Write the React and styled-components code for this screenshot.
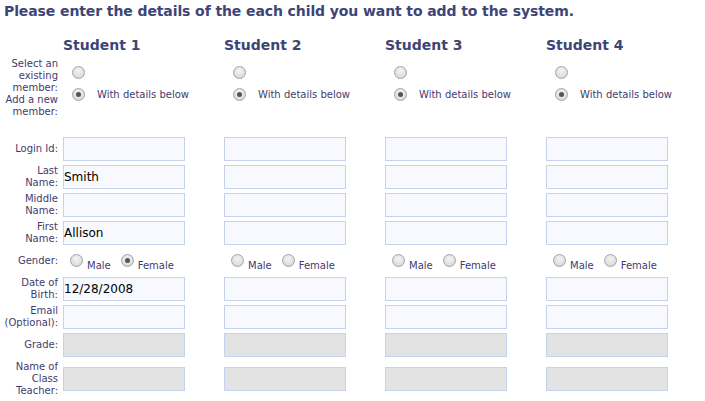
import React from "react";
import styled, { createGlobalStyle } from "styled-components";

const Global = createGlobalStyle`
    body {
        margin: 0;
        background: #ffffff;
        font-family: "DejaVu Sans", Verdana, sans-serif;
    }
`;

const Page = styled.div`
    padding: 2px 0 0 4px;
    width: 705px;
    height: 401px;
    box-sizing: border-box;
    overflow: hidden;
`;

const Heading = styled.h1`
    margin: 0;
    font-size: 14px;
    line-height: 18px;
    letter-spacing: -0.1px;
    font-weight: bold;
    color: #3d4577;
    white-space: nowrap;
`;

const Form = styled.div`
    display: grid;
    grid-template-columns: 59px repeat(4, 161px);
    row-gap: 4px;
    align-items: center;
    margin-top: 16px;
`;

const Title = styled.div`
    font-size: 14px;
    line-height: 18px;
    font-weight: bold;
    color: #3d4577;
`;

const Label = styled.div`
    font-size: 10px;
    line-height: 12px;
    color: #3f3c6e;
    text-align: right;
    padding-right: 5px;
`;

const Spacer = styled.div`
    grid-column: 1 / -1;
    height: 11px;
`;

const Choice = styled.div`
    display: flex;
    flex-direction: column;
    gap: 9px;
    padding: 8px 0 0 9px;
    align-self: start;
`;

const ChoiceRow = styled.div`
    display: flex;
    align-items: center;
    height: 13px;
    gap: 12px;
    font-size: 10px;
    color: #3f3c6e;
`;

const Radio = styled.span`
    display: inline-block;
    width: 13px;
    height: 13px;
    box-sizing: border-box;
    border-radius: 50%;
    border: 1px solid #a3a3a3;
    background: radial-gradient(circle at 50% 35%, #f4f4f4 0%, #dcdcdc 70%, #cfcfcf 100%);
    position: relative;
    flex: none;

    &::after {
        content: "";
        display: ${(p) => (p.checked ? "block" : "none")};
        position: absolute;
        left: 3px;
        top: 3px;
        width: 5px;
        height: 5px;
        border-radius: 50%;
        background: #555555;
    }
`;

const Field = styled.div`
    width: 122px;
    height: 24px;
    box-sizing: border-box;
    border: 1px solid #c4d2ee;
    background: ${(p) => (p.disabled ? "#e3e3e3" : "#f7f9fe")};
    font-size: 12px;
    line-height: 22px;
    color: #000000;
    white-space: nowrap;
    overflow: hidden;
`;

const Gender = styled.div`
    display: flex;
    align-items: center;
    height: 24px;
    padding-left: 7px;
    gap: 4px;
`;

const GenderText = styled.span`
    font-size: 10px;
    line-height: 12px;
    color: #3f3c6e;
    margin-top: 9px;
    margin-right: 6px;
`;

const GenderRadio = styled(Radio)`
    margin-bottom: 2px;
`;

const students = [
    { lastName: "Smith", firstName: "Allison", gender: "female", dob: "12/28/2008" },
    {},
    {},
    {},
];

const fields = [
    { label: ["Login Id:"], key: "login" },
    { label: ["Last", "Name:"], key: "lastName" },
    { label: ["Middle", "Name:"], key: "middleName" },
    { label: ["First", "Name:"], key: "firstName" },
    { label: ["Gender:"], key: "gender", gender: true },
    { label: ["Date of", "Birth:"], key: "dob" },
    { label: ["Email", "(Optional):"], key: "email" },
    { label: ["Grade:"], key: "grade", disabled: true },
    { label: ["Name of", "Class", "Teacher:"], key: "teacher", disabled: true },
];

function Lines({ lines }) {
    return lines.map((l, i) => <div key={i}>{l}</div>);
}

export default function App() {
    return (
        <Page>
            <Global />
            <Heading>Please enter the details of the each child you want to add to the system.</Heading>
            <Form>
                <div />
                {students.map((s, i) => (
                    <Title key={i}>Student {i + 1}</Title>
                ))}

                <Label>
                    <Lines lines={["Select an", "existing", "member:", "Add a new", "member:"]} />
                </Label>
                {students.map((s, i) => (
                    <Choice key={i}>
                        <ChoiceRow>
                            <Radio />
                        </ChoiceRow>
                        <ChoiceRow>
                            <Radio checked />
                            With details below
                        </ChoiceRow>
                    </Choice>
                ))}

                <Spacer />

                {fields.map((f) => (
                    <React.Fragment key={f.key}>
                        <Label>
                            <Lines lines={f.label} />
                        </Label>
                        {students.map((s, i) =>
                            f.gender ? (
                                <Gender key={i}>
                                    <GenderRadio checked={s.gender === "male"} />
                                    <GenderText>Male</GenderText>
                                    <GenderRadio checked={s.gender === "female"} />
                                    <GenderText>Female</GenderText>
                                </Gender>
                            ) : (
                                <Field key={i} disabled={f.disabled}>
                                    {s[f.key] || ""}
                                </Field>
                            )
                        )}
                    </React.Fragment>
                ))}
            </Form>
        </Page>
    );
}
